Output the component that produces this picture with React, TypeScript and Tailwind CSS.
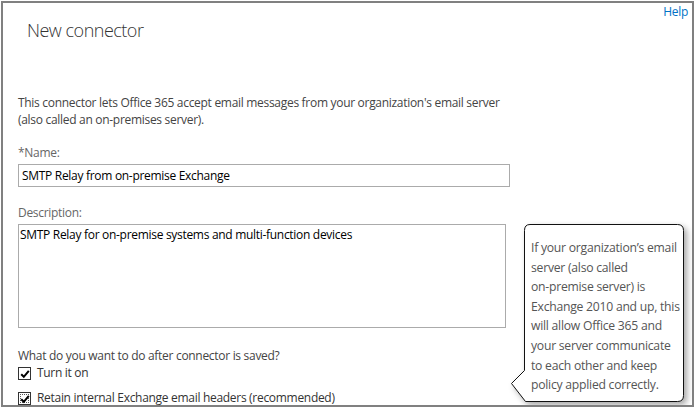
import React from "react";

const font = { fontFamily: '"Open Sans", "Noto Sans", sans-serif' };

function Check({ focused }: { focused?: boolean }) {
  return (
    <div className="relative w-[13px] h-[13px] border border-[#333] bg-white shrink-0">
      {focused && <div className="absolute inset-[1px] border border-dotted border-[#555]" />}
      <svg className="absolute left-[1px] top-[1px]" width="10" height="10" viewBox="0 0 10 10">
        <path d="M1.2 5.2 L3.8 7.8 L8.8 1.8" fill="none" stroke="#000" strokeWidth="2" />
      </svg>
    </div>
  );
}

export default function App() {
  return (
    <div className="w-[698px] h-[412px] bg-white overflow-hidden" style={font}>
      <div className="relative ml-px mt-px w-[693px] h-[406px] border-2 border-[#808080] overflow-hidden">
        <div className="flex justify-between">
          <div className="pl-6 pt-[14px] text-[18px] leading-[26px] font-light tracking-[-0.5px] text-[#333]">New connector</div>
          <div className="pt-px pr-[4px] text-[12px] leading-[16px] tracking-[-0.3px] text-[#0072c6]">Help</div>
        </div>
        <div className="pl-[15px] text-[12px] tracking-[-0.3px]">
          <p className="mt-[51px] leading-[17px] text-[#444]">
            This connector lets Office 365 accept email messages from your organization's email server
            <br />
            (also called an on-premises server).
          </p>
          <div className="mt-[17px] leading-[16px] text-[#666]">*Name:</div>
          <div className="mt-[3px] w-[492px] h-[23px] border border-[#ababab] pl-[3px] leading-[21px] text-black">
            SMTP Relay from on-premise Exchange
          </div>
          <div className="mt-[18px] leading-[16px] text-[#666]">Description:</div>
          <div className="mt-[3px] w-[488px] h-[104px] border border-[#ababab] pl-[1px] pt-[2px] leading-[16px] text-black">
            SMTP Relay for on-premise systems and multi-function devices
          </div>
          <div className="mt-[20px] leading-[16px] text-[#444]">What do you want to do after connector is saved?</div>
          <div className="mt-px flex items-center gap-[6px] leading-[16px] text-[#333]">
            <Check />
            <span>Turn it on</span>
          </div>
          <div className="mt-[9px] flex items-center gap-[6px] leading-[16px] text-[#333]">
            <Check focused />
            <span>Retain internal Exchange email headers (recommended)</span>
          </div>
        </div>
        <div className="absolute left-[505px] top-[218px] w-[180px] h-[185px]">
          <svg
            className="absolute inset-0"
            width="180"
            height="185"
            viewBox="0 0 180 185"
            style={{ filter: "drop-shadow(3px 3px 3px rgba(0,0,0,0.35))" }}
          >
            <path
              d="M22 3.5 H169.5 Q175.5 3.5 175.5 9.5 V174.5 Q175.5 180.5 169.5 180.5 H17.5 L3.5 162.5 L16.5 149.5 V9.5 Q16.5 3.5 22 3.5 Z"
              fill="#fff"
              stroke="#111"
              strokeWidth="1"
            />
          </svg>
          <div className="absolute left-[23px] top-[17px] text-[12.2px] leading-[19.6px] tracking-[-0.25px] text-[#555] whitespace-nowrap">
            If your organization’s email
            <br />
            server (also called
            <br />
            on-premise server) is
            <br />
            Exchange 2010 and up, this
            <br />
            will allow Office 365 and
            <br />
            your server communicate
            <br />
            to each other and keep
            <br />
            policy applied correctly.
          </div>
        </div>
      </div>
    </div>
  );
}
